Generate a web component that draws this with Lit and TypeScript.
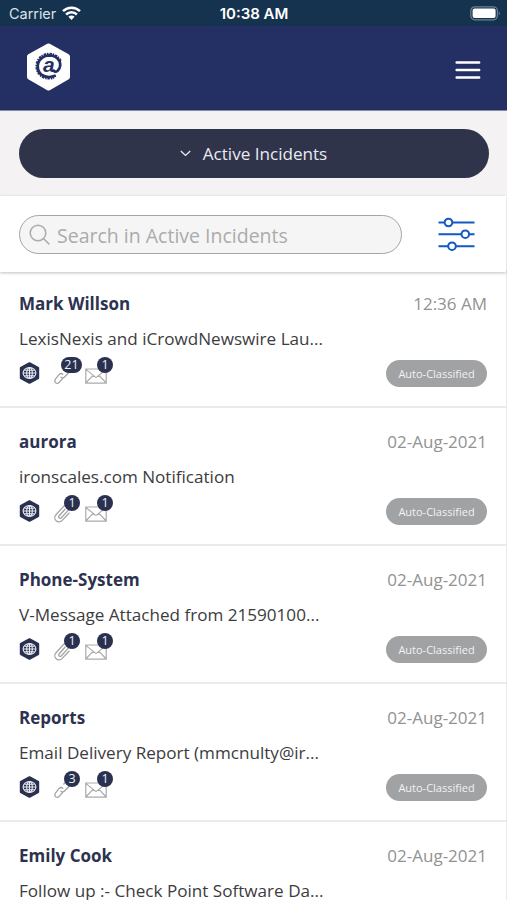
import { LitElement, html, css, svg, nothing } from "lit";
import { customElement, property } from "lit/decorators.js";

interface Incident {
  sender: string;
  time: string;
  subject: string;
  kind?: "link" | "clip";
  count?: number;
  mails?: number;
}

const incidents: Incident[] = [
  { sender: "Mark Willson", time: "12:36 AM", subject: "LexisNexis and iCrowdNewswire Lau...", kind: "link", count: 21, mails: 1 },
  { sender: "aurora", time: "02-Aug-2021", subject: "ironscales.com Notification", kind: "clip", count: 1, mails: 1 },
  { sender: "Phone-System", time: "02-Aug-2021", subject: "V-Message Attached from 21590100...", kind: "clip", count: 1, mails: 1 },
  { sender: "Reports", time: "02-Aug-2021", subject: "Email Delivery Report (mmcnulty@ir...", kind: "link", count: 3, mails: 1 },
  { sender: "Emily Cook", time: "02-Aug-2021", subject: "Follow up :- Check Point Software Da..." },
];

const linkShape = svg`
  <path d="M8.6 12.6 L5.2 16.4 Q3.2 18.2 1.5 16.6 Q.1 14.8 1.6 12.8 L5.2 8.4 Q7 6.8 8.8 8.2"/>
  <path d="M7 11.2 Q8.8 12.8 10.8 10.8 L15.4 6 A2.7 2.7 0 0 0 11.6 2.2 L9.8 4"/>`;
const clipShape = svg`
  <path d="M11 5.2 L5 12 A1.5 1.5 0 0 0 7.2 14 L13.9 6.6 A3 3 0 0 0 9.4 2.6 L2 10.8 A4.1 4.1 0 0 0 8 16.6 L15 9.2"/>`;

@customElement("incident-row")
export class IncidentRow extends LitElement {
  @property({ attribute: false }) incident!: Incident;

  static styles = css`
    :host { display: block; box-sizing: border-box; height: 138px; padding: 21px 19px 0 19px; border-bottom: 2px solid #ebebeb; background: #fff; }
    .line { display: flex; justify-content: space-between; align-items: center; height: 24px; white-space: nowrap; }
    .sender { font-weight: 700; font-size: 17px; color: #2d3250; }
    .time { font-size: 17px; color: #929292; }
    .subject { height: 24px; line-height: 24px; margin-top: 12px; font-size: 17.1px; color: #3c3c3e; white-space: nowrap; }
    .meta { margin-top: 7px; height: 30px; }
    .icons { display: flex; align-items: center; height: 30px; }
    .globe { width: 21px; height: 22px; display: block; }
    .badged { position: relative; display: block; }
    .attach { margin-left: 14px; width: 17px; height: 20px; margin-top: 5px; }
    .mail { margin-left: 14px; width: 22px; height: 17px; margin-top: 7px; }
    .badged svg { display: block; }
    .count { position: absolute; box-sizing: border-box; width: 16px; height: 16px; border-radius: 8px; background: #2a3050; color: #eef0f6; font-size: 12.5px; line-height: 16px; text-align: center; }
    .attach .count { left: 10px; top: -9px; }
    .attach .count.wide { left: 7px; width: 21px; }
    .mail .count { left: 12px; top: -11px; }
    .chip { box-sizing: border-box; width: 101px; height: 27px; border-radius: 14px; background: #a0a2a3; color: #f2f2f2; font-size: 11px; line-height: 27px; text-align: center; }
  `;

  private meta(i: Incident) {
    if (!i.kind) return nothing;
    return html`
      <div class="line meta">
        <div class="icons">
          <svg class="globe" viewBox="0 0 21 22">
            <path d="M10.5 1.2 L19.2 6 V16 L10.5 20.8 L1.8 16 V6 Z" fill="#2a3050" stroke="#2a3050" stroke-width="2" stroke-linejoin="round"/>
            <g fill="none" stroke="#e8eaf0" stroke-width="1.1">
              <ellipse cx="10.5" cy="11" rx="6.4" ry="5.4"/><ellipse cx="10.5" cy="11" rx="2.8" ry="5.4"/>
              <path d="M10.5 5.6 V16.4 M4 11 H17 M5.4 8.2 H15.6 M5.4 13.8 H15.6"/>
            </g>
          </svg>
          <span class="badged attach">
            <svg width="17" height="19" viewBox="0 0 17 19" fill="none" stroke="#a3a3a3" stroke-width="1.3" stroke-linecap="round">${i.kind === "link" ? linkShape : clipShape}</svg>
            <span class="count ${(i.count ?? 0) > 9 ? "wide" : ""}">${i.count}</span>
          </span>
          <span class="badged mail">
            <svg width="22" height="16" viewBox="0 0 22 16" fill="none" stroke="#ababab" stroke-width="1.2">
              <path d="M.8 1 H21.2 V15.2 H.8 Z M.8 1.4 L11 9.6 L21.2 1.4 M.8 15 L8 7.4 M21.2 15 L14 7.4"/>
            </svg>
            <span class="count">${i.mails}</span>
          </span>
        </div>
        <span class="chip">Auto-Classified</span>
      </div>`;
  }

  render() {
    const i = this.incident;
    return html`
      <div class="line"><span class="sender">${i.sender}</span><span class="time">${i.time}</span></div>
      <div class="subject">${i.subject}</div>
      ${this.meta(i)}`;
  }
}

@customElement("app-root")
export class AppRoot extends LitElement {
  static styles = css`
    :host { display: block; width: 507px; height: 900px; overflow: hidden; background: #fff; font-family: "Open Sans", "Noto Sans", sans-serif; }
    .status { display: grid; grid-template-columns: 1fr auto 1fr; align-items: center; box-sizing: border-box; height: 26px; padding: 1px 6px 0 9px; background: #15324e; color: #fff; font-family: Inter, "Liberation Sans", sans-serif; }
    .carrier { display: flex; align-items: center; gap: 6px; color: #dbe3ea; font-size: 14.5px; letter-spacing: -0.05px; }
    .carrier svg { margin-top: -1px; }
    .clock { font-weight: 600; font-size: 15px; margin-left: -2px; }
    .battery { justify-self: end; display: block; margin-top: -1px; }
    .header { display: flex; align-items: center; justify-content: space-between; box-sizing: border-box; height: 85px; padding: 0 26px 2px 26px; background: #242f64; border-bottom: 1px solid #858aa6; }
    .header svg { display: block; }
    .menu { margin-top: 6px; }
    .at { font: italic 700 21px "Liberation Sans", Arial, sans-serif; }
    .picker { box-sizing: border-box; height: 85px; padding: 18px 18px 0 19px; background: #f4f2f3; }
    .pill { display: flex; align-items: center; justify-content: center; gap: 12px; box-sizing: border-box; height: 49px; padding-right: 1px; border-radius: 25px; background: #2f344b; color: #e9eaf0; font-size: 17.1px; }
    .tools { position: relative; display: flex; align-items: center; box-sizing: border-box; width: 506px; height: 76px; padding: 0 31px 0 19px; justify-content: space-between; background: #fff; box-shadow: 0 1px 3px rgba(0, 0, 0, 0.25); }
    .search { display: flex; align-items: center; gap: 7px; box-sizing: border-box; width: 383px; height: 39px; padding: 1px 0 0 9px; border: 1px solid #a5a5a5; border-radius: 20px; background: #f5f5f5; color: #ababab; font-size: 19.5px; white-space: nowrap; }
    .search span { margin-top: 1px; }
    .list { width: 506px; margin-top: -2px; border-right: 1px solid #e9e9e9; }
  `;

  render() {
    return html`
      <div class="status">
        <span class="carrier"><span>Carrier</span>
          <svg width="19" height="14" viewBox="0 0 19 14" fill="none" stroke="#fff" stroke-width="2.5">
            <path d="M1 5.2 A12.2 12.2 0 0 1 18 5.2 M4.1 8.5 A7.8 7.8 0 0 1 14.9 8.5"/>
            <path d="M9.5 14 L6.4 10.8 A4.4 4.4 0 0 1 12.6 10.8 Z" fill="#fff" stroke="none"/>
          </svg>
        </span>
        <span class="clock">10:38 AM</span>
        <svg class="battery" width="31" height="15" viewBox="0 0 31 15">
          <rect x=".8" y=".8" width="26.6" height="13" rx="4" fill="none" stroke="#6d8294" stroke-width="1.2"/>
          <rect x="2.6" y="2.6" width="23" height="9.4" rx="2" fill="#fff"/>
          <path d="M28.8 5 Q31 7.3 28.8 9.6 Z" fill="#6d8294"/>
        </svg>
      </div>
      <div class="header">
        <svg width="46" height="50" viewBox="0 0 46 50">
          <path d="M22.5 4 L41.5 14.5 V35 L22.5 46 L3.5 35 V14.5 Z" fill="#fff" stroke="#fff" stroke-width="5" stroke-linejoin="round"/>
          <g fill="none" stroke="#242f64">
            <path d="M27 27.5 Q28.5 31.4 32 28.4 Q35.4 24.5 33.6 19.5 Q30.6 13.3 23 13.3 Q15 13.8 12.2 21 Q10.3 28 15.3 32.7 Q21.5 37 29.8 33.6" stroke-width="2.7"/>
            <path d="M34.6 19 Q30.5 11.4 22 11.9 Q13.5 13 11 21 Q9.4 29 15 33.8 Q20.5 37.8 28 35.6" stroke-width="2.4" stroke-dasharray="2.4 1.1 1.4 .8"/>
          </g>
          <text class="at" x="22.8" y="30" text-anchor="middle" fill="#242f64">a</text>
        </svg>
        <svg class="menu" width="26" height="20" viewBox="0 0 26 20" stroke="#fff" stroke-width="2.4" stroke-linecap="round">
          <path d="M1.6 2.5 H24.2 M1.6 10 H24.2 M1.6 17.5 H24.2"/>
        </svg>
      </div>
      <div class="picker">
        <div class="pill">
          <svg width="11" height="7" viewBox="0 0 11 7" fill="none" stroke="#e9eaf0" stroke-width="1.4"><path d="M.8 .9 L5.5 5.4 L10.2 .9"/></svg>
          <span>Active Incidents</span>
        </div>
      </div>
      <div class="tools">
        <div class="search">
          <svg width="21" height="21" viewBox="0 0 21 21" fill="none" stroke="#ababab" stroke-width="1.5" stroke-linecap="round"><circle cx="9" cy="9" r="7.8"/><path d="M14.7 14.7 L20 20"/></svg>
          <span>Search in Active Incidents</span>
        </div>
        <svg width="37" height="34" viewBox="0 0 37 34" fill="#fff" stroke="#1259c3" stroke-width="2">
          <path d="M.5 5.5 H36.5 M.5 17.2 H36.5 M.5 29.2 H36.5"/>
          <circle cx="10.5" cy="5.5" r="3.8"/><circle cx="27.3" cy="17.2" r="3.8"/><circle cx="14" cy="29.2" r="3.8"/>
        </svg>
      </div>
      <div class="list">
        ${incidents.map((i) => html`<incident-row .incident=${i}></incident-row>`)}
      </div>`;
  }
}
